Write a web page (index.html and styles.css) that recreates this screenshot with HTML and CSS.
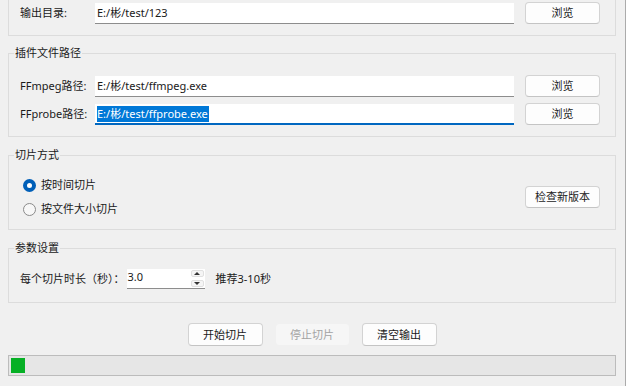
FILE: index.html
```html
<!DOCTYPE html>
<html lang="zh-CN">
<head>
<meta charset="utf-8">
<title>切片工具</title>
<link rel="stylesheet" href="styles.css">
</head>
<body>
<div class="window">
  <div class="group group-cut">
    <div class="row">
      <span class="label">输出目录:</span>
      <div class="input">E:/彬/test/123</div>
      <button class="btn">浏览</button>
    </div>
  </div>

  <div class="group g2">
    <div class="group-title">插件文件路径</div>
    <div class="rows">
      <div class="row">
        <span class="label">FFmpeg路径:</span>
        <div class="input">E:/彬/test/ffmpeg.exe</div>
        <button class="btn">浏览</button>
      </div>
      <div class="row">
        <span class="label">FFprobe路径:</span>
        <div class="input focused"><span class="sel">E:/彬/test/ffprobe.exe</span></div>
        <button class="btn">浏览</button>
      </div>
    </div>
  </div>

  <div class="group g3">
    <div class="group-title">切片方式</div>
    <div class="split">
      <div class="radios">
        <div class="radio checked"><span class="circle"></span><span>按时间切片</span></div>
        <div class="radio"><span class="circle"></span><span>按文件大小切片</span></div>
      </div>
      <button class="btn">检查新版本</button>
    </div>
  </div>

  <div class="group g4">
    <div class="group-title">参数设置</div>
    <div class="param-row">
      <span class="plabel">每个切片时长（秒）：</span>
      <div class="spin">
        <span class="spin-val">3.0</span>
        <div class="spin-btns">
          <span class="spin-btn"><span class="tri-up"></span></span>
          <span class="spin-btn"><span class="tri-down"></span></span>
        </div>
      </div>
      <span class="hint">推荐3-10秒</span>
    </div>
  </div>

  <div class="actions">
    <button class="btn">开始切片</button>
    <button class="btn disabled">停止切片</button>
    <button class="btn">清空输出</button>
  </div>

  <div class="progress"><div class="chunk"></div></div>
</div>
</body>
</html>
```

FILE: styles.css
```css
html, body {
  margin: 0;
  padding: 0;
}
body {
  background: #f0f0f0;
  font-family: "Noto Sans", "Noto Sans CJK SC", sans-serif;
  font-size: 11px;
  line-height: 16px;
  color: #1a1a1a;
}
.window {
  width: 626px;
  height: 386px;
  box-sizing: border-box;
  padding: 0 9px 0 8px;
  border-right: 1px solid #ababab;
  overflow: hidden;
}
.group {
  border: 1px solid #dcdcdc;
  padding: 0 15px 0 11px;
}
.group-cut {
  margin-top: -13px;
  padding-top: 14px;
  padding-bottom: 11px;
}
.group-title {
  margin: -9px 0 0 -6px;
  padding: 0 1px;
  width: fit-content;
  height: 16px;
  background: #f0f0f0;
  color: #1a1a1a;
}
.g2 { margin-top: 17px; padding-bottom: 11px; }
.g3 { margin-top: 18px; padding-bottom: 10px; }
.g4 { margin-top: 18px; padding-bottom: 13px; }

.rows {
  margin-top: 14px;
  display: flex;
  flex-direction: column;
  gap: 6px;
}
.row {
  display: flex;
  align-items: center;
  height: 22px;
}
.label {
  width: 75px;
  flex: none;
  white-space: nowrap;
}
.input {
  flex: 1;
  height: 21px;
  box-sizing: border-box;
  margin-right: 11px;
  background: #ffffff;
  border-bottom: 1px solid #8d8d8d;
  padding: 2px 0 0 2px;
  white-space: nowrap;
}
.input.focused {
  border-bottom: 2px solid #0067c0;
}
.sel {
  background: #0078d7;
  color: #ffffff;
  display: inline-block;
  padding: 0 1px 0 0;
}
.btn {
  width: 75px;
  height: 22px;
  flex: none;
  box-sizing: border-box;
  background: #fdfdfd;
  border: 1px solid #d3d3d3;
  border-bottom-color: #c4c4c4;
  border-radius: 4px;
  font: inherit;
  color: #1a1a1a;
  padding: 0;
  text-align: center;
}
.btn.disabled {
  background: #f6f6f6;
  border-color: #f0f0f0;
  color: #a3a3a3;
}

.split {
  margin-top: 12px;
  display: flex;
  align-items: center;
  justify-content: space-between;
}
.radios {
  display: flex;
  flex-direction: column;
  gap: 4px;
}
.radio {
  display: flex;
  align-items: center;
  height: 20px;
}
.circle {
  width: 13px;
  height: 13px;
  box-sizing: border-box;
  margin-left: 3px;
  margin-right: 5px;
  border-radius: 50%;
  border: 1px solid #8a8a8a;
  background: #f7f7f7;
  flex: none;
}
.radio.checked .circle {
  border: 4px solid #005fb8;
  background: #ffffff;
}

.param-row {
  margin-top: 13px;
  display: flex;
  align-items: center;
  height: 20px;
}
.plabel {
  white-space: nowrap;
}
.spin {
  margin-left: 2px;
  width: 78px;
  height: 20px;
  box-sizing: border-box;
  background: #ffffff;
  border-bottom: 1px solid #8d8d8d;
  display: flex;
  align-items: center;
  justify-content: space-between;
}
.spin-val {
  padding-left: 1px;
  margin-top: -3px;
}
.spin-btns {
  display: flex;
  flex-direction: column;
  gap: 3px;
  margin-right: 1px;
}
.spin-btn {
  width: 13px;
  height: 7px;
  box-sizing: border-box;
  background: #f5f5f5;
  border: 1px solid #e0e0e0;
  border-radius: 2px;
  display: flex;
  align-items: center;
  justify-content: center;
}
.tri-up {
  width: 0;
  height: 0;
  border-left: 3px solid transparent;
  border-right: 3px solid transparent;
  border-bottom: 3px solid #333333;
}
.tri-down {
  width: 0;
  height: 0;
  border-left: 3px solid transparent;
  border-right: 3px solid transparent;
  border-top: 3px solid #333333;
}
.hint {
  margin-left: 11px;
}

.actions {
  margin-top: 20px;
  display: flex;
  justify-content: center;
  gap: 12px;
}
.actions .btn {
  height: 23px;
}
.progress {
  margin-top: 9px;
  height: 21px;
  box-sizing: border-box;
  background: #e6e6e6;
  border: 1px solid #bcbcbc;
  padding: 2px;
}
.chunk {
  width: 14px;
  height: 15px;
  background: #06b025;
}
```
